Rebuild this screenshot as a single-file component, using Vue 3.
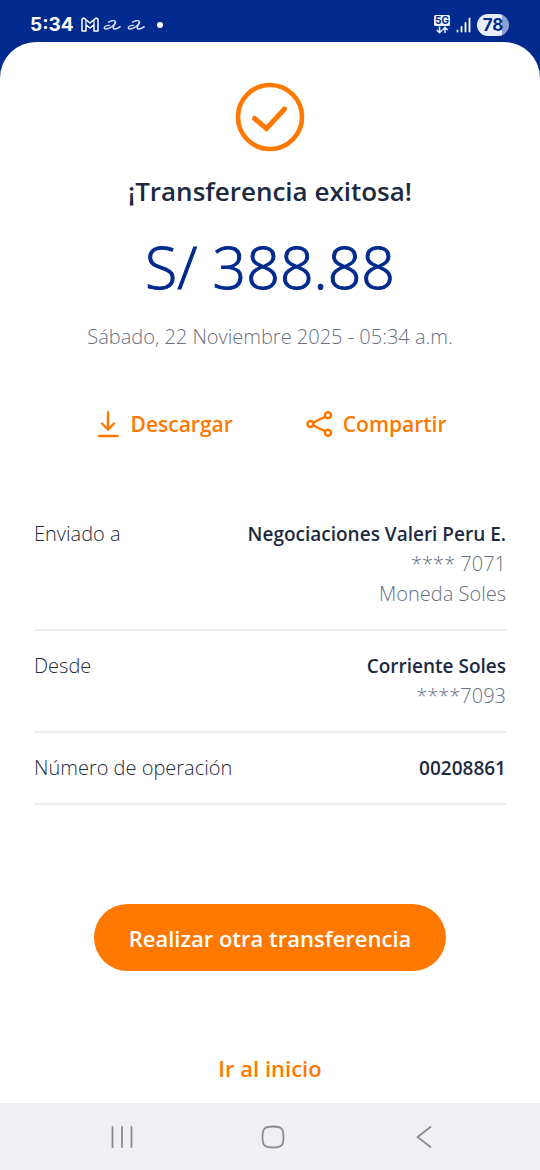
<script setup>
const details = [
  { label: 'Enviado a', value: 'Negociaciones Valeri Peru E.', notes: ['**** 7071', 'Moneda Soles'] },
  { label: 'Desde', value: 'Corriente Soles', notes: ['****7093'] },
  { label: 'Número de operación', value: '00208861', notes: [] },
]
</script>

<template>
  <div class="screen">
    <header class="status">
      <div class="status-side">
        <span class="time">5:34</span>
        <svg class="mail" width="18" height="16" viewBox="0 0 18 16" fill="none" stroke="#fff" stroke-width="1.5" stroke-linejoin="round" aria-hidden="true">
          <path d="M1 3.2Q1 1 3 1.2L9 6L15 1.2Q17 1 17 3.2V14H13V7.8L9 11L5 7.8V14H1Z" />
          <path d="M5 7.6V3M13 7.6V3" stroke-width="1.2" />
        </svg>
        <svg v-for="n in 2" :key="n" class="swirl" width="18" height="12" viewBox="0 0 18 12" fill="none" stroke="#dfe7ff" stroke-linecap="round" aria-hidden="true">
          <path d="M5.500 3.200C8 1.300 12.500 1 12.500 3C12.500 5.500 6.500 10 3 10C.4 10 .6 7.400 4 6.600L6.500 6.400" stroke-width="1.300" />
          <path d="M12.500 3C12 5.500 9.300 8.300 10.500 9.600C11.800 10.600 15 9.200 17 7.800" stroke-width="1.500" />
        </svg>
        <span class="dot"></span>
      </div>
      <div class="status-side">
        <svg width="18" height="20" viewBox="0 0 18 20" aria-hidden="true">
          <rect x="1" y="0" width="16" height="11" rx="1.500" fill="#eef2ff" />
          <text x="9" y="9" text-anchor="middle" class="net">5G</text>
          <path d="M6.500 11.500V17.500M3.800 15L6.500 17.700L9.200 15M12 18V12.500M9.600 15L12 12.300L14.700 15" fill="none" stroke="#eef2ff" stroke-width="1.500" />
        </svg>
        <svg class="signal" width="15" height="16" viewBox="0 0 15 16" stroke="#fff" stroke-width="1.800" stroke-linecap="round" aria-hidden="true">
          <path d="M1.500 13.500V14.500M5.500 10V14.500M9.500 6V14.500M13.500 1.500V14.500" />
        </svg>
        <span class="battery">78</span>
      </div>
    </header>

    <main class="sheet">
      <svg class="check" width="70" height="70" viewBox="0 0 70 70" fill="none" stroke="#ff7800" aria-hidden="true">
        <circle cx="35" cy="35" r="32" stroke-width="4.600" />
        <path d="M19.500 36.500L31.500 46.500L49.500 27" stroke-width="5" stroke-linecap="round" />
      </svg>
      <h1 class="title">¡Transferencia exitosa!</h1>
      <p class="amount">S/ 388.88</p>
      <p class="date">Sábado, 22 Noviembre 2025 - 05:34 a.m.</p>

      <div class="actions">
        <button type="button" class="action">
          <svg width="28" height="28" viewBox="0 0 28 28" fill="none" stroke="#ff7800" stroke-width="2.400" stroke-linecap="round" aria-hidden="true">
            <path d="M14 2.500V19M8 13.500L14 19.500L20 13.500M5 26H23.500" />
          </svg>
          Descargar
        </button>
        <button type="button" class="action">
          <svg width="28" height="28" viewBox="0 0 28 28" fill="none" stroke="#ff7800" stroke-width="2.500" aria-hidden="true">
            <circle cx="4.500" cy="14" r="3" />
            <circle cx="22" cy="5.300" r="3" />
            <circle cx="22" cy="22.700" r="3" />
            <path d="M7.300 12.500L19 6.800M7.300 15.500L19 21.200" />
          </svg>
          Compartir
        </button>
      </div>

      <dl class="details">
        <div v-for="row in details" :key="row.label" class="row">
          <dt>{{ row.label }}</dt>
          <dd class="value">{{ row.value }}</dd>
          <dd v-for="note in row.notes" :key="note" class="note">{{ note }}</dd>
        </div>
      </dl>

      <button type="button" class="primary">Realizar otra transferencia</button>
      <a href="#" class="home">Ir al inicio</a>
    </main>

    <nav class="navbar" aria-label="Sistema">
      <button type="button" aria-label="Recientes">
        <svg width="24" height="24" viewBox="0 0 24 24" fill="none" stroke="#8c8c8e" stroke-width="1.800" stroke-linecap="round">
          <path d="M2.500 2V22M12 2V22M21.500 2V22" />
        </svg>
      </button>
      <button type="button" aria-label="Inicio">
        <svg width="24" height="24" viewBox="0 0 24 24" fill="none" stroke="#8c8c8e" stroke-width="1.800">
          <path d="M12 1.500C20.500 1.500 22.500 3.500 22.500 12S20.500 22.500 12 22.500S1.500 20.500 1.500 12S3.500 1.500 12 1.500Z" />
        </svg>
      </button>
      <button type="button" aria-label="Atrás">
        <svg width="24" height="24" viewBox="0 0 24 24" fill="none" stroke="#8c8c8e" stroke-width="1.800" stroke-linecap="round" stroke-linejoin="round">
          <path d="M18.500 2L5.500 12L18.500 22" />
        </svg>
      </button>
    </nav>
  </div>
</template>

<style>
body {
  margin: 0;
  background: #002a8d;
}
</style>

<style scoped>
.screen {
  display: flex;
  flex-direction: column;
  min-height: 100vh;
  background: #002a8d;
  font-family: "Open Sans", "Noto Sans", sans-serif;
  color: #1d2a40;
}
.status {
  display: flex;
  justify-content: space-between;
  align-items: center;
  box-sizing: border-box;
  height: 42px;
  padding: 8px 31px 0 30px;
}
.status-side {
  display: flex;
  align-items: center;
}
.time {
  color: #fff;
  font: 700 19px/24px Inter, sans-serif;
}
.mail {
  margin: 0 4px 0 7px;
}
.swirl {
  margin-right: 6px;
}
.dot {
  width: 6px;
  height: 6px;
  margin-left: 6px;
  border-radius: 50%;
  background: #fff;
}
.net {
  fill: #002a8d;
  font: 700 10px Inter, sans-serif;
}
.signal {
  margin: 0 6px 0 5px;
}
.battery {
  width: 32px;
  border-radius: 11px;
  background: linear-gradient(90deg, #e8eeff 78%, #8d9fd2 78%);
  color: #002a8d;
  font: 700 17px/22px Inter, sans-serif;
  text-align: center;
}
.sheet {
  display: flex;
  flex: 1;
  flex-direction: column;
  align-items: center;
  box-sizing: border-box;
  padding: 40px 34px 19px;
  border-radius: 36px 36px 0 0;
  background: #fff;
}
.title {
  margin: 19px 0 0;
  font-size: 26px;
  font-weight: 600;
  line-height: 40px;
}
.amount {
  margin: 23px 0 0;
  color: #002a8d;
  font-size: 59px;
  font-weight: 300;
  line-height: 64px;
  -webkit-text-stroke: 1px #002a8d;
}
.date {
  margin: 24px 0 0;
  color: #667080;
  font-size: 20px;
  font-weight: 300;
  line-height: 30px;
}
.actions {
  display: flex;
  gap: 73px;
  margin-top: 52px;
}
button {
  padding: 0;
  border: 0;
  background: none;
  font-family: inherit;
  cursor: pointer;
}
.action {
  display: flex;
  align-items: center;
  gap: 9px;
  height: 40px;
  color: #ff7800;
  font-size: 21px;
  font-weight: 600;
}
.details {
  align-self: stretch;
  margin: 55px 0 0;
  font-size: 20px;
  line-height: 30px;
}
.row {
  display: grid;
  grid-template-columns: auto 1fr;
  padding: 20px 0;
  border-bottom: 2px solid #ebecee;
}
dt {
  font-weight: 300;
}
dd {
  grid-column: 2;
  margin: 0;
  text-align: right;
}
.value {
  font-size: 19px;
  font-weight: 600;
}
.note {
  color: #667080;
  font-weight: 300;
}
.primary {
  height: 67px;
  margin-top: 99px;
  padding: 0 35px;
  border-radius: 34px;
  background: #ff7800;
  color: #fff;
  font-size: 22px;
  font-weight: 600;
}
.home {
  margin-top: 82px;
  color: #ff7800;
  font-size: 22px;
  font-weight: 600;
  line-height: 30px;
  text-decoration: none;
}
.navbar {
  display: grid;
  grid-template-columns: repeat(3, 1fr);
  justify-items: center;
  align-items: center;
  height: 67px;
  padding: 0 40px 0 46px;
  background: #f0f0f2;
}
.navbar button {
  display: flex;
}
</style>
